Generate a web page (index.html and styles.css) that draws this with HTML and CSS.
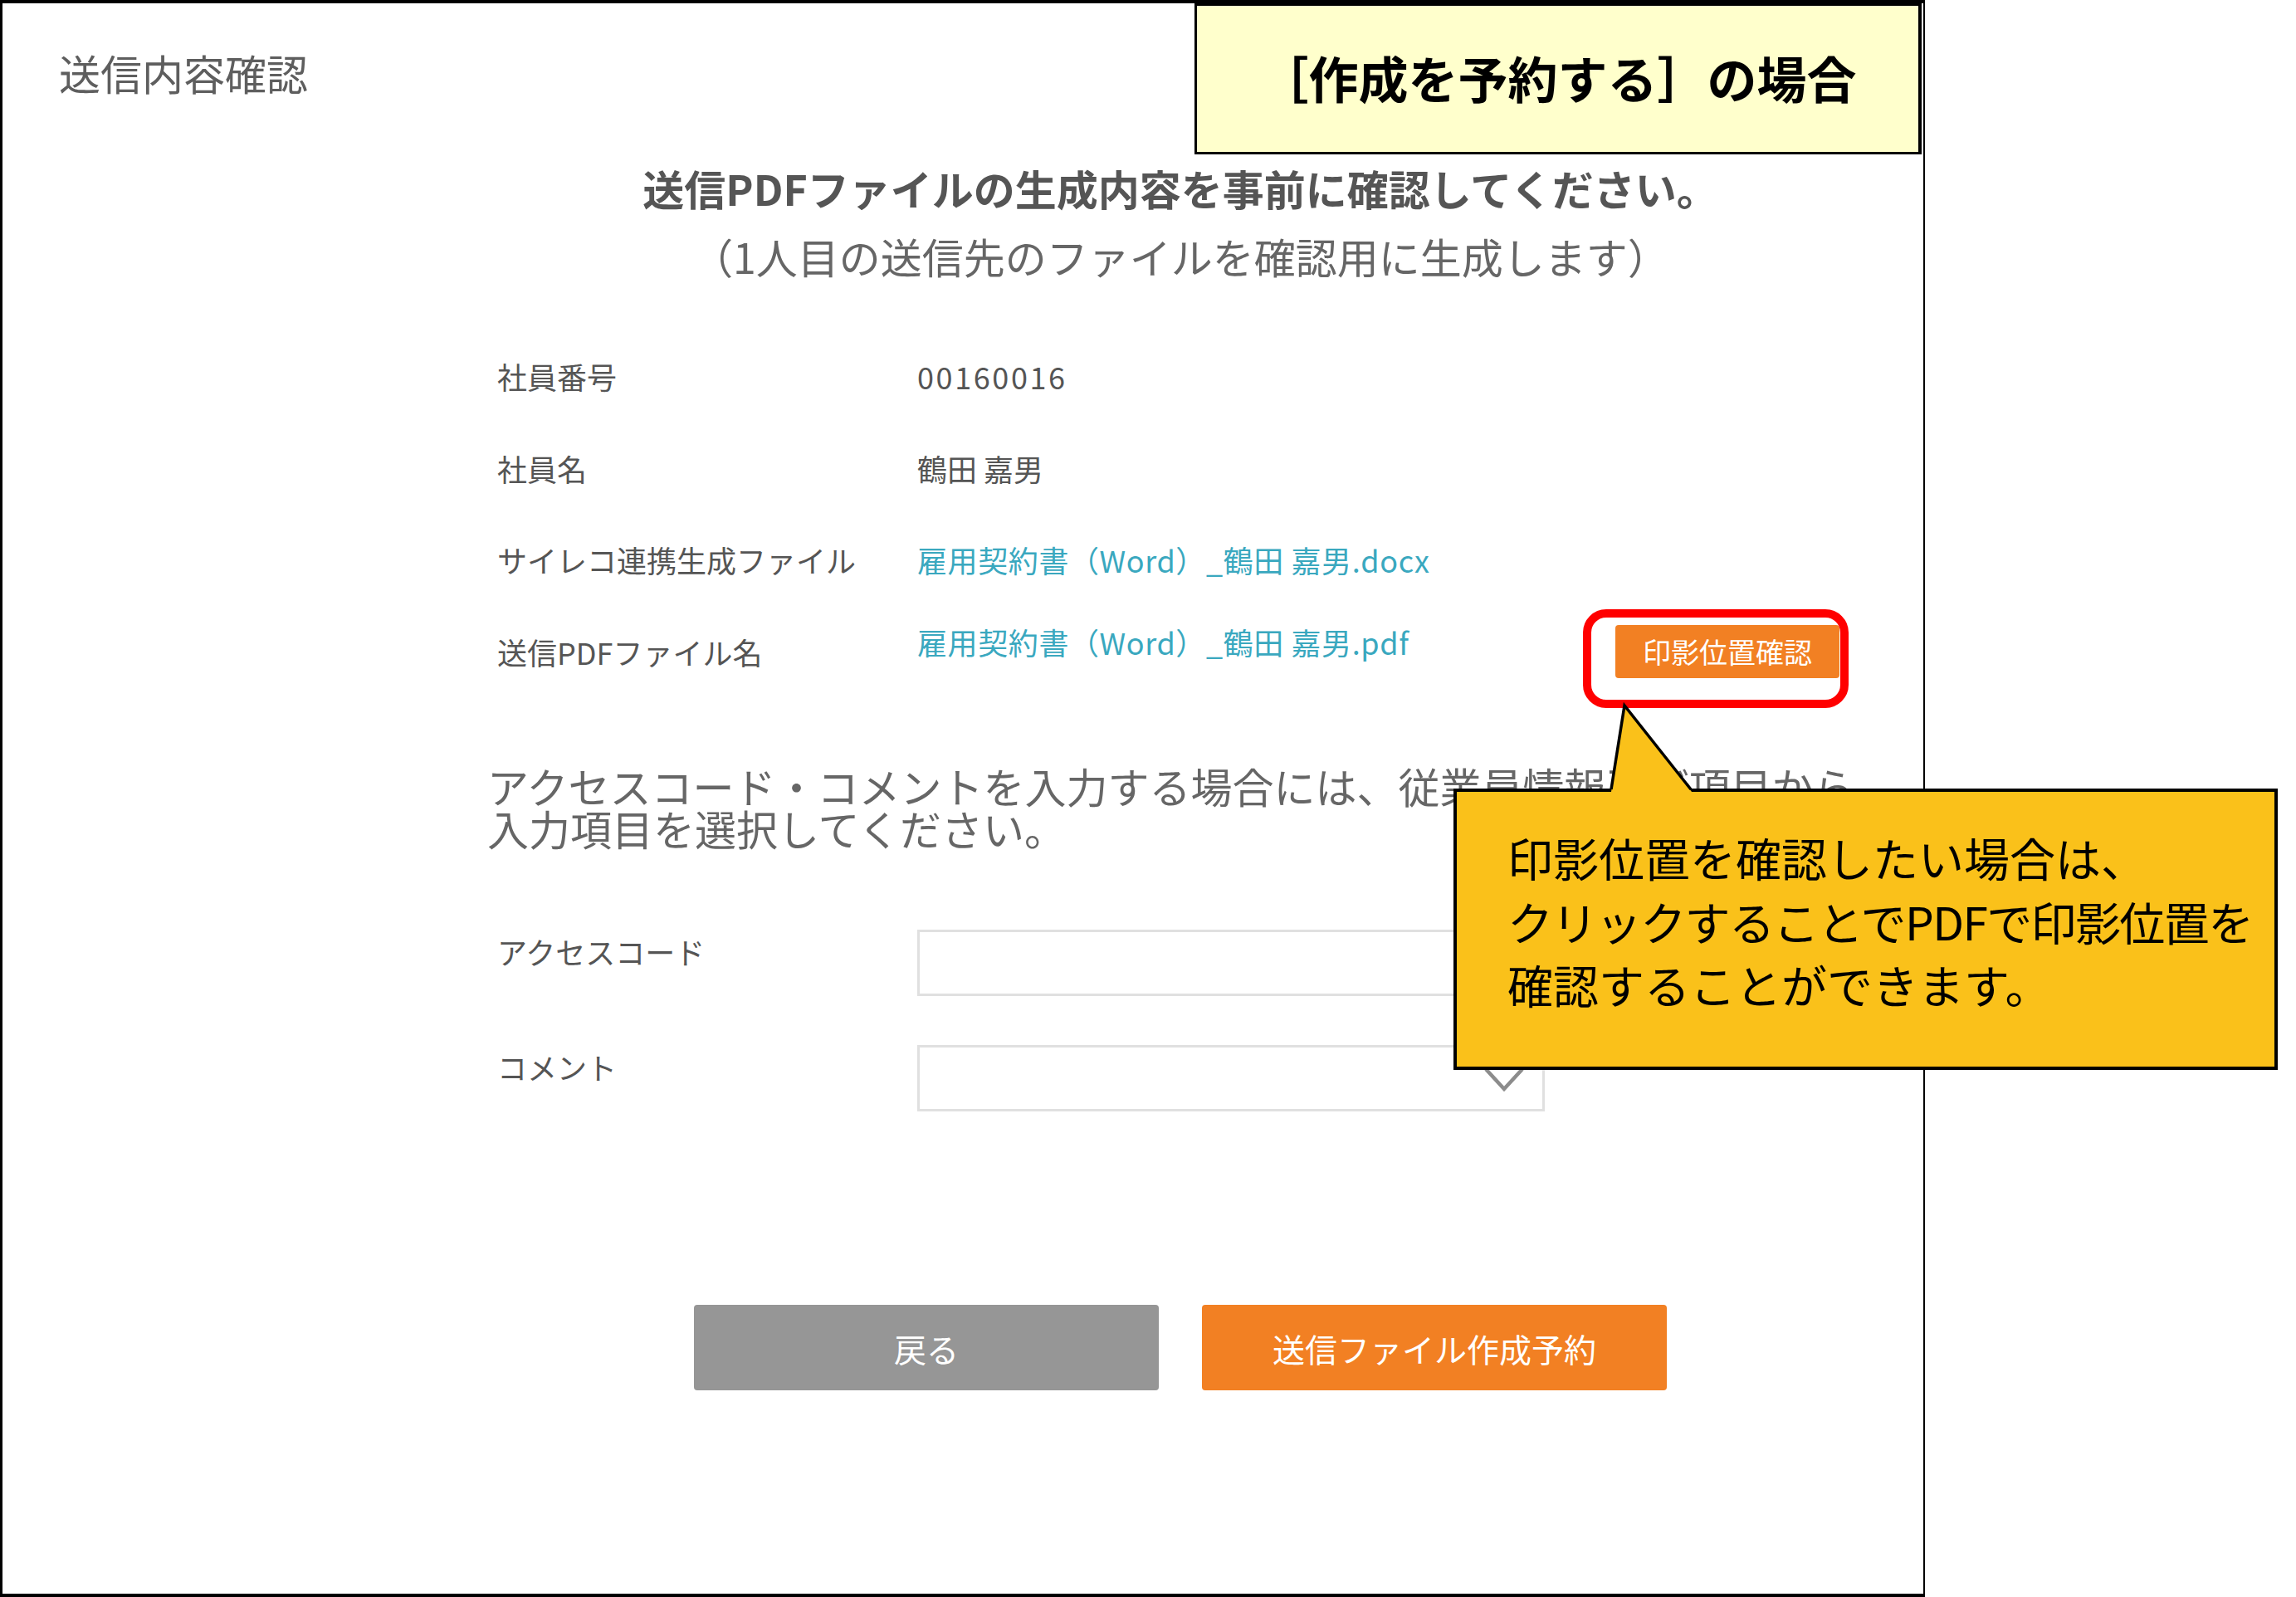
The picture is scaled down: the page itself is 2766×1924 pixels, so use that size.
FILE: index.html
```html
<!DOCTYPE html>
<html lang="ja">
<head>
<meta charset="utf-8">
<title>送信内容確認</title>
<link rel="stylesheet" href="styles.css">
</head>
<body>
<div class="page">
  <div class="frame">
    <h1 class="title">送信内容確認</h1>
    <div class="content">
      <p class="lead">送信PDFファイルの生成内容を事前に確認してください。</p>
      <p class="sub">（1人目の送信先のファイルを確認用に生成します）</p>
      <div class="rows">
        <div class="row"><span class="label">社員番号</span><span class="value digits">00160016</span></div>
        <div class="row"><span class="label">社員名</span><span class="value">鶴田 嘉男</span></div>
        <div class="row"><span class="label">サイレコ連携生成ファイル</span><span class="value link">雇用契約書（Word）_鶴田 嘉男.docx</span></div>
        <div class="row"><span class="label">送信PDFファイル名</span><span class="value link raised">雇用契約書（Word）_鶴田 嘉男.pdf</span><span class="stamp-btn">印影位置確認</span></div>
      </div>
      <p class="note"><span class="note-line">アクセスコード・コメントを入力する場合には、従業員情報及び項目から</span><span class="note-line">入力項目を選択してください。</span></p>
      <div class="form-row first"><span class="label">アクセスコード</span><div class="input"></div></div>
      <div class="form-row"><span class="label">コメント</span><div class="input select"><svg class="chevron" width="60" height="40" viewBox="0 0 60 40"><polyline points="8,6 30,30 52,6" fill="none" stroke="#8c8c8c" stroke-width="4.5"/></svg></div></div>
      <div class="actions"><button class="btn btn-back">戻る</button><button class="btn btn-submit">送信ファイル作成予約</button></div>
    </div>
  </div>
  <div class="case-label">［作成を予約する］の場合</div>
  <div class="highlight"></div>
  <div class="callout"><span class="callout-line">印影位置を確認したい場合は、</span><span class="callout-line tight">クリックすることでPDFで印影位置を</span><span class="callout-line">確認することができます。</span></div>
  <svg class="tail" width="120" height="115" viewBox="0 0 120 115">
    <polygon points="27,5 11,109 108,109" fill="#fac11a"/>
    <polyline points="11,106 27,5 107,106" fill="none" stroke="#000" stroke-width="3.5" stroke-linejoin="miter"/>
  </svg>
</div>
</body>
</html>
```
FILE: styles.css
```css
* { box-sizing: border-box; }
html, body { margin: 0; padding: 0; background: #fff; }
body {
  width: 2766px;
  height: 1924px;
  overflow: hidden;
  font-family: "Noto Sans CJK JP", "Noto Sans", sans-serif;
}
.page {
  position: relative;
  width: 2766px;
  height: 1924px;
}
.frame {
  width: 2319px;
  height: 1924px;
  border-top: 4px solid #000;
  border-left: 3px solid #000;
  border-right: 2px solid #000;
  border-bottom: 4px solid #000;
  background: #fff;
}
.title {
  margin: 53px 0 0 68px;
  font-size: 50px;
  line-height: 60px;
  font-weight: 400;
  color: #5e5e5e;
}
.content {
  margin-left: 584px;
  width: 1670px;
}
.lead {
  margin: 79px 0 0;
  text-align: center;
  font-size: 50px;
  line-height: 60px;
  font-weight: 700;
  color: #555;
}
.sub {
  margin: 22px 0 0;
  text-align: center;
  font-size: 50px;
  line-height: 60px;
  color: #666;
}
.rows {
  margin-top: 60px;
  display: flex;
  flex-direction: column;
}
.row {
  height: 110.5px;
  display: flex;
  align-items: center;
  padding-left: 12px;
  padding-right: 41px;
}
.label {
  width: 506px;
  flex: none;
  font-size: 36px;
  line-height: 44px;
  color: #555;
}
.value {
  flex: 1;
  font-size: 36px;
  line-height: 44px;
  color: #555;
  white-space: nowrap;
}
.digits { letter-spacing: 2.6px; }
.link { color: #3aa8bf; letter-spacing: 0.6px; }
.raised { margin-bottom: 24px; }
.stamp-btn {
  flex: none;
  width: 270px;
  height: 64px;
  background: #f28023;
  color: #fff;
  border-radius: 4px;
  font-size: 34px;
  line-height: 64px;
  text-align: center;
}
.note {
  margin: 81px 0 0;
  font-size: 50px;
  color: #666;
  white-space: nowrap;
  display: flex;
  flex-direction: column;
}
.note-line {
  display: block;
  height: 51px;
  line-height: 51px;
}
.form-row {
  display: flex;
  align-items: flex-start;
  padding-left: 12px;
  margin-top: 59px;
}
.form-row.first { margin-top: 97px; }
.form-row .label { padding-top: 4px; }
.input {
  position: relative;
  width: 756px;
  height: 80px;
  border: 3px solid #e0e0e0;
  background: #fff;
}
.chevron {
  position: absolute;
  right: 16px;
  top: 20px;
}
.actions {
  margin-top: 233px;
  display: flex;
  justify-content: center;
  gap: 52px;
}
.btn {
  width: 560px;
  height: 103px;
  border: none;
  border-radius: 4px;
  color: #fff;
  font-family: "Noto Sans CJK JP", "Noto Sans", sans-serif;
  font-size: 39px;
  padding: 0;
}
.btn-back { background: #969696; }
.btn-submit { background: #f28023; }

.case-label {
  position: absolute;
  left: 1439px;
  top: 4px;
  width: 876px;
  height: 182px;
  border: 3px solid #000;
  border-right-width: 4px;
  background: #ffffcc;
  color: #000;
  font-size: 60px;
  font-weight: 700;
  display: flex;
  align-items: center;
  justify-content: center;
  padding-bottom: 6px;
  white-space: nowrap;
}
.highlight {
  position: absolute;
  left: 1907px;
  top: 734px;
  width: 320px;
  height: 119px;
  border: 10px solid #ff0000;
  border-radius: 28px;
}
.callout {
  position: absolute;
  left: 1751px;
  top: 950px;
  width: 993px;
  height: 339px;
  border: 4px solid #000;
  background: #fac11a;
  color: #000;
  font-size: 55px;
  padding: 40px 0 0 61px;
  white-space: nowrap;
  display: flex;
  flex-direction: column;
}
.callout-line {
  display: block;
  line-height: 76.5px;
}
.callout-line.tight { letter-spacing: -1.6px; }
.tail {
  position: absolute;
  left: 1930px;
  top: 845px;
}
```
